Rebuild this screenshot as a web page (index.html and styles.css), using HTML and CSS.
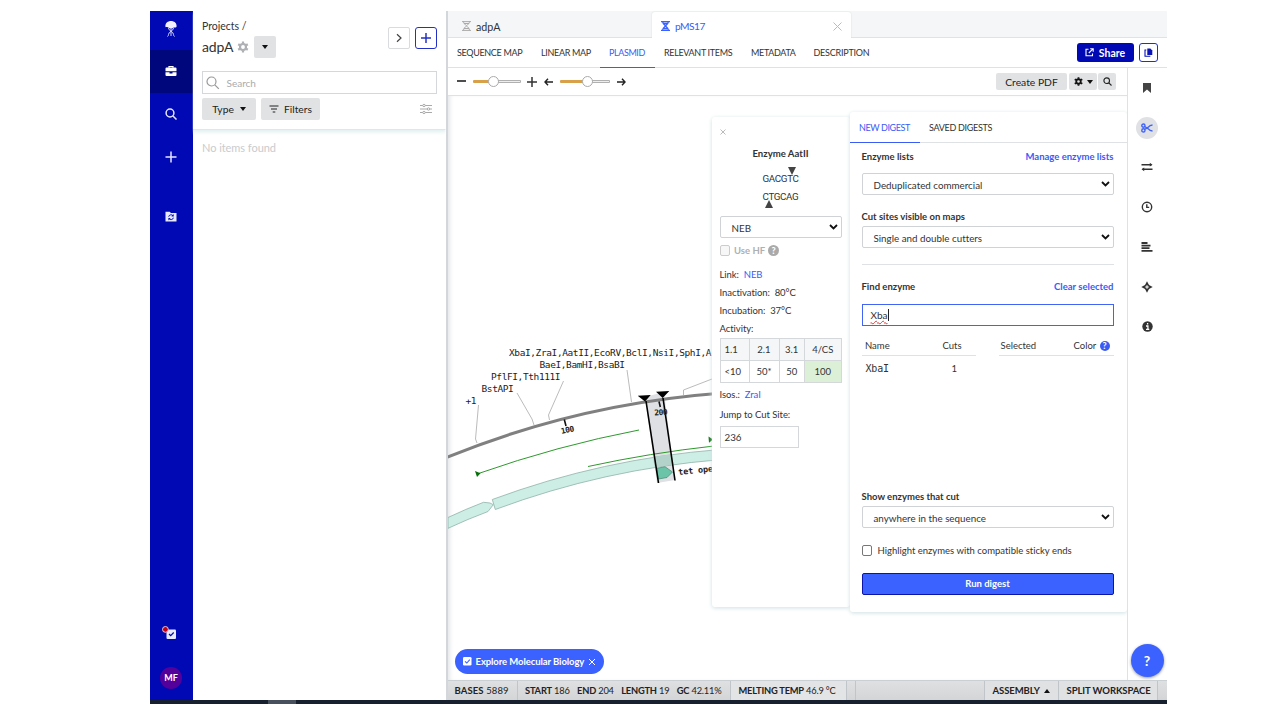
FILE: index.html
```html
<!DOCTYPE html>
<html lang="en">
<head>
<meta charset="utf-8">
<title>pMS17 plasmid</title>
<link rel="stylesheet" href="styles.css">
</head>
<body>
<div class="app">
  <div class="main">
    <nav class="side">
      <div class="side-item logo">
        <svg width="14" height="18" viewBox="0 0 14 18" fill="none" stroke="#d5d6f6" stroke-width="1"><path d="M1.500 7C.8 3 4 1 7 1s6.200 2 5.500 6c-1.500.8-2.500.2-3.500 1-1.500.6-2.500.6-4 0-1-.8-2-.2-3.500-1z" fill="#f0f0ff" stroke="none"/><path d="M4.500 8c0 3 5 3.500 5 6.500 0 1 .5 1.500 1 2M9.500 8c0 3-5 3.500-5 6.500 0 1-.5 1.500-1 2M7 8v8"/></svg>
      </div>
      <div class="side-item active">
        <svg width="12" height="12" viewBox="0 0 12 12"><path d="M4 2.800V1.500h4v1.300" fill="none" stroke="#fff" stroke-width="1.200"/><path d="M1.500 2.600h9q1 0 1 1V6.300H.5V3.600q0-1 1-1zM.5 7.200h4v1.200h3V7.200h4v2.900q0 .9-1 .9h-9q-1 0-1-.9z" fill="#fff"/></svg>
      </div>
      <div class="side-item"><svg width="12" height="12" viewBox="0 0 12 12" fill="none" stroke="#e4e5fa" stroke-width="1.500"><circle cx="5" cy="5" r="3.900"/><path d="M8 8l3.500 3.500"/></svg></div>
      <div class="side-item"><svg width="12" height="12" viewBox="0 0 12 12" stroke="#e4e5fa" stroke-width="1.500"><path d="M.5 6h11M6 .5v11"/></svg></div>
      <div class="side-item folder"><svg width="12" height="11" viewBox="0 0 12 11"><path d="M.5.8h4.200L6 2h5.500v8.500H.5z" fill="#e8e9fb"/><path d="M3.700 5.700a2.400 2.200 0 0 1 4.300-1M8.400 6.700a2.400 2.200 0 0 1-4.300 1" fill="none" stroke="#0009b4"/><path d="M8.700 3v2.400H6.400zM3.400 9.400V7h2.300z" fill="#0009b4"/></svg></div>
      <div class="side-item tasks"><svg width="15" height="14" viewBox="0 0 15 14"><rect x="4.500" y="3.500" width="9.500" height="9.500" rx="1" fill="#e8e9fb"/><path d="M7 8l1.700 1.700 3-3.200" fill="none" stroke="#0009b4" stroke-width="1.200"/><circle cx="3.400" cy="3.400" r="2.900" fill="#c00010" stroke="#f0d8e8" stroke-width=".9"/></svg></div>
      <div class="side-item"><span class="avatar">MF</span></div>
    </nav>

    <section class="projects">
      <header class="proj-head">
        <div class="proj-top">
          <div class="proj-title">
            <div class="crumb">Projects /</div>
            <div class="title-row"><span class="proj-name">adpA</span>
              <svg width="12" height="12" viewBox="0 0 12 12"><circle cx="6" cy="6" r="3" fill="none" stroke="#aeb0b3" stroke-width="2.200"/><path d="M6 .4v2M6 9.600v2M1.200 3.200l1.700 1M9.100 7.800l1.700 1M1.200 8.800l1.700-1M9.100 4.200l1.700-1" stroke="#aeb0b3" stroke-width="2.200"/></svg>
              <span class="gray-btn drop"><i class="caret"></i></span>
            </div>
          </div>
          <span class="sq"><svg width="8" height="10" viewBox="0 0 8 10"><path d="M2 1.200L6 5 2 8.800" fill="none" stroke="#444" stroke-width="1.200"/></svg></span>
          <span class="sq blue"><svg width="10" height="10" viewBox="0 0 10 10"><path d="M0 5h10M5 0v10" stroke="#2330c4" stroke-width="1.500"/></svg></span>
        </div>
        <div class="search"><svg width="14" height="14" viewBox="0 0 14 14" fill="none" stroke="#999" stroke-width="1.200"><circle cx="5.500" cy="5.500" r="4.500"/><path d="M8.800 8.800l4 4"/></svg><span>Search</span></div>
        <div class="filters">
          <span class="gray-btn type">Type <i class="caret"></i></span>
          <span class="gray-btn filt"><svg width="10" height="8" viewBox="0 0 10 8"><path d="M.5 1h9M2 4h6M3.700 7h2.600" stroke="#222" stroke-width="1.200"/></svg>Filters</span>
          <svg class="sliders" width="12" height="12" viewBox="0 0 12 12" fill="#fff" stroke="#aaa"><path d="M0 2.500h12M0 6h12M0 9.500h12"/><circle cx="4" cy="2.500" r="1.200"/><circle cx="8.500" cy="6" r="1.200"/><circle cx="4" cy="9.500" r="1.200"/></svg>
        </div>
      </header>
      <p class="empty">No items found</p>
    </section>

    <section class="work">
      <div class="tabs">
        <div class="tab first"><svg width="9" height="10" viewBox="0 0 9 10" fill="none" stroke="#aaa"><path d="M0 .6h9M0 9.400h9M1.500.6c0 3.400 6 5 6 8.800M7.500.6c0 3.400-6 5-6 8.800M2 2.500h5M2 7.500h5"/></svg>adpA</div>
        <div class="tab on"><svg width="9" height="10" viewBox="0 0 9 10" fill="none" stroke="#3b62ff" stroke-width="1.300"><path d="M0 .6h9M0 9.400h9M1.500.6c0 3.400 6 5 6 8.800M7.500.6c0 3.400-6 5-6 8.800M2 2.500h5M2 7.500h5"/></svg>pMS17<svg class="tab-x" width="9" height="9" viewBox="0 0 9 9" stroke="#bbb"><path d="M.5.5l8 8M8.500.5l-8 8"/></svg></div>
      </div>
      <div class="views">
        <span class="view v1">SEQUENCE MAP</span><span class="view v2">LINEAR MAP</span><span class="view v3">PLASMID</span><span class="view v4">RELEVANT ITEMS</span><span class="view v5">METADATA</span><span class="view v6">DESCRIPTION</span>
        <span class="share"><svg width="9" height="9" viewBox="0 0 9 9" fill="none" stroke="#fff" stroke-width="1.100"><path d="M3.500 1.300H1v6.500h6.500V5.500M5.200.7h3v3M8 .9L3.800 5"/></svg>Share</span>
        <span class="copy"><svg width="9" height="9" viewBox="0 0 9 9"><path d="M3.300.5h3L8.300 2.500V7h-5z" fill="#0a14b8"/><path d="M2.300 2H1v6.300h4.800v-.6" fill="none" stroke="#0a14b8" stroke-width="1.100"/></svg></span>
      </div>
      <div class="body">
        <div class="center">
          <div class="tools">
            <svg width="9" height="9" viewBox="0 0 9 9" stroke="#222" stroke-width="1.600"><path d="M0 4h9"/></svg>
            <div class="range r1"><i class="knob"></i></div>
            <svg width="10" height="10" viewBox="0 0 10 10" stroke="#333" stroke-width="1.500"><path d="M0 5h10M5 0v10"/></svg>
            <svg class="arr1" width="9" height="8" viewBox="0 0 9 8" fill="none" stroke="#222" stroke-width="1.400"><path d="M9 4H1M4 .8L1 4l3 3.200"/></svg>
            <div class="range r2"><i class="knob"></i></div>
            <svg width="9" height="8" viewBox="0 0 9 8" fill="none" stroke="#222" stroke-width="1.400"><path d="M0 4h8M5 .8L8 4 5 7.200"/></svg>
            <span class="tbtn pdf">Create PDF</span>
            <span class="tbtn gear"><svg width="9" height="9" viewBox="0 0 12 12"><circle cx="6" cy="6" r="3" fill="none" stroke="#111" stroke-width="2.400"/><path d="M6 .2v2M6 9.800v2M1 3.100l1.700 1M9.300 7.900l1.700 1M1 8.900l1.700-1M9.300 4.100l1.700-1" stroke="#111" stroke-width="2.400"/></svg><i class="caret small"></i></span>
            <span class="tbtn find"><svg width="9" height="9" viewBox="0 0 9 9" fill="none" stroke="#222" stroke-width="1.100"><circle cx="3.700" cy="3.700" r="2.800"/><path d="M5.800 5.800l2.700 2.700"/></svg></span>
          </div>
          <div class="canvas">
            <svg class="map" width="679" height="584" viewBox="448 96 679 584">
              <path d="M645 397L664 392 675 480 657 483z" fill="#dfe0e3"/>
              <path d="M448 517.500Q466 509 483.500 502.300L490 503 493.300 504.700 488 511.500Q468 519 448 528.300z" fill="#cdeee4" stroke="#8fb3aa" stroke-width=".8"/>
              <path d="M492.300 499.500A845 845 0 0 1 720 449.500V459.700A835 835 0 0 0 495.300 509.500z" fill="#cdeee4" stroke="#8fb3aa" stroke-width=".8"/>
              <path d="M653 457L671.700 454.300 673.500 464.500 654.500 467.500z" fill="#b3d3ca"/>
              <path d="M656.500 468.500L665 466.700 672.500 472 667 477.500 658.500 479z" fill="#6cc4a8" stroke="#3e8a73" stroke-width=".7"/>
              <g fill="none" stroke="#2d9a2d"><path d="M477 474Q558 445.500 639 430"/><path d="M588 466.500Q650 453 714 446"/></g>
              <path d="M475 471L480.500 473.300 477 477z" fill="#087008"/><path d="M708.500 436.500L713 439.500 709 442.800z" fill="#087008"/>
              <path d="M446 457.700A900 900 0 0 1 720 393.300" fill="none" stroke="#808080" stroke-width="3"/>
              <g fill="none" stroke="#aaa" stroke-width=".8"><path d="M478.500 405L475.500 439 477 443M517 393L532 419 534 425M563.500 381L548.500 415 549.500 420M627 370L631.500 402M712 379L683.500 390V395"/></g>
              <path d="M646 401L658.500 483M663 398L675 480.500" stroke="#000" stroke-width="1.600"/>
              <path d="M637.700 395.700L650.700 395 645 401.500zM656 391.700L669.300 391 662.700 398z"/>
              <path d="M564.300 419.500L566 426M659 401.500L660.300 407" stroke="#111" stroke-width="1.600"/>
              <g class="seq-label"><text x="509" y="356">XbaI,ZraI,AatII,EcoRV,BclI,NsiI,SphI,AcuI</text><text x="539.500" y="368">BaeI,BamHI,BsaBI</text><text x="491" y="380">PflFI,Tth111I</text><text x="481.500" y="392">BstAPI</text><text x="465.500" y="404">+1</text></g>
              <g class="tick-label"><text transform="translate(561.500 434) rotate(-12)">100</text><text transform="translate(654.500 415.500) rotate(-4)">200</text><text class="feature" transform="translate(678.500 475) rotate(-6)">tet operator</text></g>
            </svg>

            <aside class="enzyme">
              <div class="close"><svg width="6" height="6" viewBox="0 0 6 6" stroke="#bbb"><path d="M.5.5l5 5M5.500.5l-5 5"/></svg></div>
              <h2 class="ez-title">Enzyme AatII</h2>
              <div class="site"><i class="tri down"></i>GACGTC</div>
              <div class="site two">CTGCAG<i class="tri up"></i></div>
              <div class="select ez-sel"><span>NEB</span><svg width="9" height="6" viewBox="0 0 9 6"><path d="M1 1l3.500 3.500L8 1" fill="none" stroke="#111" stroke-width="1.800"/></svg></div>
              <div class="hf"><i class="box dim"></i>Use HF <b class="help">?</b></div>
              <div class="fact">Link: &nbsp;<a>NEB</a></div>
              <div class="fact">Inactivation: &nbsp;80°C</div>
              <div class="fact">Incubation: &nbsp;37°C</div>
              <div class="fact">Activity:</div>
              <div class="activity"><span class="th">1.1</span><span class="th">2.1</span><span class="th">3.1</span><span class="th">4/CS</span><span>&lt;10</span><span>50*</span><span>50</span><span class="best">100</span></div>
              <div class="fact isos">Isos.: &nbsp;<a>ZraI</a></div>
              <div class="fact jump">Jump to Cut Site:</div>
              <div class="jump-in">236</div>
            </aside>

            <aside class="digest">
              <div class="dtabs"><span class="dtab on">NEW DIGEST</span><span class="dtab two">SAVED DIGESTS</span></div>
              <div class="form">
                <div class="lab l1"><b>Enzyme lists</b><a>Manage enzyme lists</a></div>
                <div class="select"><span>Deduplicated commercial</span><svg width="9" height="6" viewBox="0 0 9 6"><path d="M1 1l3.500 3.500L8 1" fill="none" stroke="#111" stroke-width="1.800"/></svg></div>
                <div class="lab l2"><b>Cut sites visible on maps</b></div>
                <div class="select"><span>Single and double cutters</span><svg width="9" height="6" viewBox="0 0 9 6"><path d="M1 1l3.500 3.500L8 1" fill="none" stroke="#111" stroke-width="1.800"/></svg></div>
                <div class="rule"></div>
                <div class="lab l3"><b>Find enzyme</b><a>Clear selected</a></div>
                <div class="input"><span class="typo">Xba</span><i class="cursor"></i></div>
                <div class="lists">
                  <div class="list found"><div class="lhead"><span>Name</span><span>Cuts</span></div><div class="lrow"><span class="mono">XbaI</span><span>1</span></div></div>
                  <div class="list chosen"><div class="lhead"><span>Selected</span><span>Color <b class="help bluehelp">?</b></span></div></div>
                </div>
                <div class="lab l4"><b>Show enzymes that cut</b></div>
                <div class="select"><span>anywhere in the sequence</span><svg width="9" height="6" viewBox="0 0 9 6"><path d="M1 1l3.500 3.500L8 1" fill="none" stroke="#111" stroke-width="1.800"/></svg></div>
                <div class="check"><i class="box"></i><span>Highlight enzymes with compatible sticky ends</span></div>
                <div class="run">Run digest</div>
              </div>
            </aside>
            <div class="pill"><svg width="9" height="9" viewBox="0 0 9 9"><rect width="8.500" height="8.500" rx="1.300" fill="#fff"/><path d="M2 4.300L3.800 6l3-3.300" fill="none" stroke="#3b62ff" stroke-width="1.100"/></svg><span>Explore Molecular Biology</span><svg width="8" height="8" viewBox="0 0 8 8" stroke="#fff"><path d="M1 1l6 6M7 1L1 7"/></svg></div>
          </div>
        </div>
        <div class="rail">
          <div class="ri"><svg width="10" height="12" viewBox="0 0 10 12"><path d="M1 1h8v10L5 7.500 1 11z" fill="#444"/></svg></div>
          <div class="ri"><span class="disc"><svg width="12" height="10" viewBox="0 0 12 10" fill="none" stroke="#4264f5" stroke-width="1.400"><circle cx="2.400" cy="2.600" r="1.600"/><circle cx="2.400" cy="7.400" r="1.600"/><path d="M3.600 3.500L7 5.600Q9 8 11.500 8M3.600 6.500L7 4.400Q9 2 11.500 2"/></svg></span></div>
          <div class="ri"><svg width="12" height="10" viewBox="0 0 12 10"><path d="M.5 2.700h10M1.500 7.300h10" stroke="#333" stroke-width="1.400"/><path d="M8.800.7L11.500 2.700 8.800 4.600zM3.200 5.400L.5 7.300l2.700 2z" fill="#333"/></svg></div>
          <div class="ri"><svg width="12" height="12" viewBox="0 0 12 12" fill="none" stroke="#333" stroke-width="1.400"><circle cx="6" cy="6" r="4.700"/><path d="M5.800 3.200v3.200h2.400"/></svg></div>
          <div class="ri"><svg width="12" height="10" viewBox="0 0 12 10" stroke="#333" stroke-width="1.800"><path d="M.5 1h6M.5 3.600h9M.5 6.200h8M.5 8.800h11"/></svg></div>
          <div class="ri"><svg width="12" height="12" viewBox="0 0 12 12"><path d="M6 .3L8 4 11.700 6 8 8 6 11.700 4 8 .3 6 4 4z" fill="#333"/><path d="M6 4.200v3.600M4.200 6h3.600" stroke="#fff" stroke-width="1.100"/></svg></div>
          <div class="ri"><svg width="11" height="11" viewBox="0 0 11 11"><circle cx="5.500" cy="5.500" r="5.200" fill="#333"/><path d="M5.600 2v1.600M4 5h1.900v3.300M4 8.400h3.300" fill="none" stroke="#fff" stroke-width="1.300"/></svg></div>
          <div class="ask">?</div>
        </div>
      </div>
      <footer class="status">
        <span class="st s1"><b>BASES</b> 5889</span>
        <span class="st s2"><span><b>START</b> 186</span><span><b>END</b> 204</span><span><b>LENGTH</b> 19</span><span><b>GC</b> 42.11%</span></span>
        <span class="st s3"><b>MELTING TEMP</b> 46.9 °C</span>
        <span class="st s4"></span><span class="st s5"></span>
        <span class="st s6"><b>ASSEMBLY</b><i class="caret upc"></i></span>
        <span class="st s7"><b>SPLIT WORKSPACE</b></span>
        <span class="st s8"></span>
      </footer>
    </section>
  </div>
  <div class="taskbar"><i class="task-on"></i></div>
</div>
</body>
</html>
```
FILE: styles.css
```css
* { box-sizing: border-box; }
body { margin: 0; background: #fff; font-family: Lato, "Liberation Sans", sans-serif; font-size: 10px; color: #333; overflow: hidden; font-variant-ligatures: none; }
svg { display: block; flex: none; }
a { color: #3b5bf5; }
.app { margin: 11px 0 0 149.500px; width: 1017px; height: 693px; display: flex; flex-direction: column; }
.main { height: 689px; display: flex; }
.taskbar { height: 4px; background: #17202f; padding-left: 118px; }
.task-on { display: block; width: 28px; height: 4px; background: #48505e; }

.side { width: 43px; background: #0009b4; display: flex; flex-direction: column; }
.side-item { height: 43px; display: flex; align-items: center; justify-content: center; flex: none; padding-bottom: 1px; }
.logo { height: 39px; padding-bottom: 4px; }
.active { background: #00067c; padding-bottom: 2px; }
.folder { margin-top: 16px; padding-bottom: 0; }
.tasks { margin-top: auto; height: 46px; padding-right: 3px; padding-bottom: 0; }
.side-item:last-child { height: 44px; padding-bottom: 0; }
.avatar { width: 22px; height: 22px; border-radius: 50%; background: #54009b; color: #fff; font-weight: 700; font-size: 9px; line-height: 22px; text-align: center; }

.projects { width: 255px; border-right: 2px solid #d3d6da; }
.proj-head { height: 119px; padding: 8px 9px 0 9.500px; border-bottom: 1px solid #dce9ea; box-shadow: 0 2px 4px #e0eeee; clip-path: inset(0 0 -8px 0); }
.proj-top { display: flex; height: 52px; gap: 5px; }
.proj-title { flex: 1; }
.crumb { font-size: 10.500px; line-height: 15px; height: 15px; }
.title-row { display: flex; align-items: center; gap: 4px; height: 26px; }
.proj-name { font-size: 14px; letter-spacing: -.15px; padding-bottom: 2px; }
.gray-btn { background: #e1e2e4; border-radius: 2px; display: flex; align-items: center; justify-content: center; height: 22px; font-size: 10.300px; color: #222; }
.drop { width: 22px; margin-left: 1px; }
.caret { display: inline-block; border: 3.500px solid transparent; border-top: 4px solid #111; border-bottom: 0; }
.small { border-width: 4px 3px 0; }
.upc { border-top: 0; border-bottom: 4px solid #111; }
.sq { width: 22px; height: 22px; border: 1px solid #d9dbdd; border-radius: 2px; margin-top: 8px; display: flex; align-items: center; justify-content: center; }
.blue { border-color: #2330c4; border-radius: 3px; }
.search { height: 23px; border: 1px solid #d4d8da; display: flex; align-items: center; padding-left: 3px; gap: 6.500px; color: #a9abad; }
.filters { display: flex; gap: 5px; margin-top: 4px; align-items: center; }
.type { width: 54px; gap: 6px; }
.filt { width: 59px; gap: 5px; }
.sliders { margin-left: auto; margin-right: 5px; }
.empty { margin: 10px 0 0 9.500px; font-size: 11px; line-height: 15px; letter-spacing: -.05px; color: #c9cbcd; }

.work { flex: 1; min-width: 0; display: flex; flex-direction: column; }
.tabs { height: 27px; background: #f5f6f8; border-bottom: 1px solid #dde3e6; display: flex; align-items: flex-end; }
.tab { height: 25px; display: flex; align-items: center; font-size: 10.700px; gap: 5px; padding-top: 5px; }
.first { width: 204px; padding-left: 14.500px; }
.tab.on { width: 199px; height: 26px; margin-bottom: -1px; background: #fff; border-radius: 3px 3px 0 0; color: #3b5bf5; font-size: 10.200px; letter-spacing: -.5px; padding: 2px 9px 0 9.500px; box-shadow: 0 0 2px #d4dcdf; clip-path: inset(-3px -3px 0 -3px); }
.tab-x { margin-left: auto; }
.first { padding-top: 3px; }
.views { height: 30px; border-bottom: 1px solid #dfe2e4; display: flex; align-items: center; }
.view { height: 30px; line-height: 30px; font-size: 9px; letter-spacing: -.33px; padding: 0 0 0 9.500px; white-space: nowrap; flex: none; }
.v1 { width: 84px; }
.v2 { width: 68px; }
.v3 { width: 55px; border-bottom: 1px solid #3b5bf5; color: #3b5bf5; letter-spacing: -.4px; }
.v4 { width: 87px; }
.v5 { width: 62.500px; }
.v6 { letter-spacing: -.22px; }
.share { margin-left: auto; width: 57px; height: 19px; background: #0009b4; color: #fff; border-radius: 3px; display: flex; align-items: center; justify-content: center; gap: 5px; font-size: 10.500px; font-weight: 700; }
.copy { width: 19px; height: 19px; border: 1px solid #2330c4; border-radius: 3px; margin: 0 9px 0 5px; display: flex; align-items: center; justify-content: center; }
.body { flex: 1; display: flex; min-height: 0; }
.center { width: 679.500px; display: flex; flex-direction: column; }
.tools { height: 28px; border-bottom: 1px solid #dfe2e4; display: flex; align-items: center; padding: 0 11px 0 9.500px; }
.range { height: 3px; border-radius: 1px; display: flex; align-items: center; }
.r1 { width: 48px; margin: 0 6px 0 7px; background: linear-gradient(90deg, #d9a04a 40%, #b0b0b0 40%); padding-left: 15px; }
.r2 { width: 50px; margin: 0 7px; background: linear-gradient(90deg, #d9a04a 50%, #b0b0b0 50%); padding-left: 22px; }
.range::after { content: ""; flex: 1; height: 1px; margin-right: 1px; background: #eee; }
.knob { width: 11px; height: 11px; border-radius: 50%; border: 1px solid #aaa; background: #fff; flex: none; }
.arr1 { margin-left: 7px; }
.tbtn { height: 17px; background: #e1e2e4; border-radius: 2px; display: flex; align-items: center; justify-content: center; font-size: 10.300px; color: #222; }
.pdf { margin-left: auto; width: 71px; }
.gear { margin-left: 2px; width: 28px; gap: 4px; }
.find { margin-left: 1px; width: 18px; }

.canvas { position: relative; height: 584px; overflow: hidden; box-shadow: inset 4px 0 4px -2px #e4e6e8; }
.map { width: 679px; height: 584px; }
.seq-label { font-family: "DejaVu Sans Mono", monospace; font-size: 9.500px; letter-spacing: -.4px; fill: #222; }
.tick-label { font-family: "DejaVu Sans Mono", monospace; font-weight: 700; font-size: 8px; letter-spacing: -.5px; fill: #222; }
.feature { font-size: 8.500px; letter-spacing: -.15px; }

.enzyme { position: absolute; left: 264px; top: 21px; width: 138px; height: 490px; background: #fff; border-radius: 3px; box-shadow: 0 1px 4px #cfe0e2; padding: 0 8px; font-size: 9.500px; }
.close { height: 30px; padding: 12px 0 0; }
.ez-title { margin: 0; height: 15px; line-height: 13px; font-size: 9.600px; text-align: center; }
.site { position: relative; width: 37px; margin: 7px auto 0 43px; font-family: Roboto, sans-serif; font-size: 9.800px; line-height: 19px; height: 18px; white-space: nowrap; letter-spacing: -.35px; }
.two { margin-top: 0; margin-bottom: 11px; }
.tri { position: absolute; border: 4px solid transparent; }
.down { border-top: 8px solid #444; border-bottom: 0; left: 25.500px; top: -2px; }
.up { border-bottom: 8px solid #444; border-top: 0; left: 2px; top: 13px; }
.select { height: 22px; border: 1px solid #cfd3d6; border-radius: 2px; display: flex; align-items: center; justify-content: space-between; padding: 1px 3px 0 11px; font-size: 9.800px; }
.select svg { margin-top: -2px; }
.hf { height: 25px; display: flex; align-items: center; gap: 4px; color: #aeb0b2; font-weight: 700; }
.box { width: 10.500px; height: 10.500px; border: 1px solid #777; border-radius: 2px; flex: none; }
.dim { border-color: #ccc; background: #f7f7f8; }
.help { width: 11px; height: 11px; border-radius: 50%; background: #aaa; color: #fff; font-size: 9px; line-height: 11px; text-align: center; display: inline-block; margin-left: -1px; }
.fact { height: 18px; line-height: 18px; white-space: pre; letter-spacing: -.05px; }
.hf + .fact { margin-top: 2.500px; }
.activity { display: grid; grid-template-columns: 29px 30px 25.500px 1fr; grid-template-rows: 22px 22px; border: 1px solid #d5d8da; border-width: 1px 0 0 1px; }
.activity span { border: 1px solid #d5d8da; border-width: 0 1px 1px 0; line-height: 22px; text-align: center; }
.activity .th { background: #f5f6f8; }
.activity span:nth-child(4n+1) { text-align: left; padding-left: 4px; }
.activity .best { background: #dcefd7; }
.isos { margin-top: 3px; }
.jump { margin-top: 2.500px; }
.jump-in { width: 79px; height: 22px; border: 1px solid #d5d8da; line-height: 20px; padding-left: 4px; font-size: 9.800px; margin-top: 2px; }

.digest { position: absolute; left: 402px; top: 16px; width: 277px; height: 500px; background: #fff; border-radius: 3px; box-shadow: 0 1px 4px #cfe0e2; }
.dtabs { height: 31px; border-bottom: 1px solid #dfe2e4; display: flex; font-size: 9px; letter-spacing: -.3px; line-height: 32px; }
.dtab { height: 31px; padding: 0 9.500px; }
.dtab.on { color: #3b5bf5; border-bottom: 1px solid #3b5bf5; width: 70px; white-space: nowrap; letter-spacing: -.4px; }
.form { padding: 0 13px 0 12px; }
.lab { display: flex; justify-content: space-between; align-items: center; }
.lab b, .lab a { font-weight: 700; font-size: 9.500px; }
.l1 { height: 30px; padding-bottom: 3px; }
.l2 { height: 31px; padding-top: 11px; }
.rule { height: 1px; background: #dfe2e4; margin: 16px 0 0; }
.l3 { height: 39px; padding-top: 4px; }
.input { height: 22px; border: 1px solid #4264f5; display: flex; align-items: center; padding-left: 8px; font-size: 10px; }
.typo { text-decoration: underline wavy #e33 1px; text-underline-offset: 1px; }
.cursor { width: 1px; height: 12px; background: #222; }
.lists { display: flex; justify-content: space-between; height: 160px; padding-top: 9px; font-size: 9.500px; }
.found { width: 114px; }
.chosen { width: 115px; }
.lhead { display: flex; justify-content: space-between; align-items: center; height: 21px; border-bottom: 1px solid #dfe2e4; padding: 0 4px 0 3.500px; }
.found .lhead { padding-right: 14px; }
.lrow { display: flex; justify-content: space-between; align-items: center; height: 25px; padding: 0 18.500px 0 4px; }
.mono { font-family: "DejaVu Sans Mono", monospace; font-size: 10px; letter-spacing: -.2px; }
.bluehelp { background: #3b5bf5; margin-left: 1px; width: 10px; height: 10px; line-height: 10px; }
.chosen .lhead { padding-left: 2px; }
.l4 { height: 20px; }
.check { display: flex; align-items: center; gap: 5.500px; height: 45px; font-size: 9.500px; white-space: nowrap; }
.run { height: 22px; background: #3b62ff; border: 1px solid #0b16a8; border-radius: 2px; color: #fff; font-weight: 700; line-height: 20px; text-align: center; font-size: 9.500px; }
.pill { position: absolute; left: 7px; top: 553px; width: 149px; height: 25px; border-radius: 13px; background: #3b62ff; color: #fff; font-weight: 700; font-size: 9.500px; letter-spacing: -.08px; display: flex; align-items: center; padding: 0 7px 0 8px; gap: 4px; white-space: nowrap; }

.rail { width: 39px; border-left: 1px solid #dfe2e4; display: flex; flex-direction: column; align-items: center; }
.ri { height: 39.800px; display: flex; align-items: center; justify-content: center; }
.disc { width: 22px; height: 22px; border-radius: 50%; background: #dfe1e4; display: flex; align-items: center; justify-content: center; }
.ask { margin-top: auto; margin-bottom: 3px; width: 33px; height: 33px; border-radius: 50%; background: #3b62ff; color: #fff; font-weight: 700; font-size: 14px; line-height: 33px; text-align: center; box-shadow: 0 1px 3px #999; }

.status { height: 20px; flex: none; border-top: 1px solid #c9cfd2; background: linear-gradient(#dfe0e2, #d4d5d7); display: flex; font-size: 9.500px; letter-spacing: -.08px; line-height: 20px; color: #222; }
.st { border-right: 1px solid #bfc5c8; white-space: nowrap; flex: none; }
.st b { font-weight: 700; }
.s1 { width: 70px; padding-left: 7px; letter-spacing: .1px; }
.s2 { width: 213px; padding: 0 8px 0 7.500px; display: flex; justify-content: space-between; font-size: 9.300px; letter-spacing: -.2px; }
.s3 { width: 116px; padding-left: 8px; background: #e3e4e6; font-size: 9.300px; letter-spacing: -.2px; }
.s4 { width: 9px; }
.s5 { flex: 1; }
.s6 { width: 74px; padding: 0 8px; background: #e0e1e3; display: flex; justify-content: space-between; align-items: center; }
.s7 { width: 99px; padding-left: 8px; background: #e0e1e3; }
.s8 { width: 9px; border: 0; }
```
